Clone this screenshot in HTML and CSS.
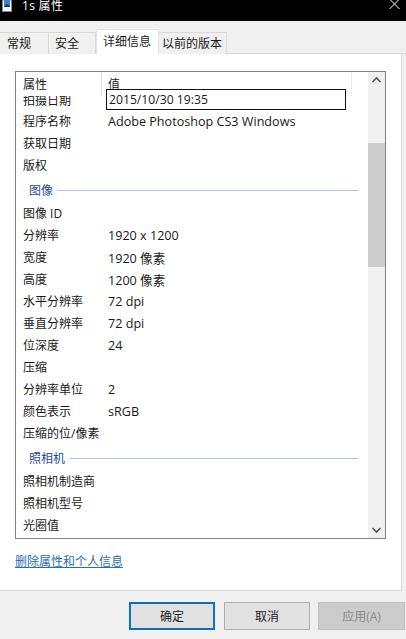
FILE: index.html
```html
<!DOCTYPE html>
<html lang="zh-CN">
<head>
    <meta charset="UTF-8">
    <meta name="viewport" content="width=device-width, initial-scale=1.0">
    <title>1s 属性</title>
    <link rel="stylesheet" href="styles.css">
</head>
<body>
    <div class="window">
        <div class="titlebar">
            <svg class="file-icon" width="11" height="12" viewBox="0 0 11 12">
                <rect x="0.5" y="0" width="9" height="11.5" fill="#f4f8fc" stroke="#7d8ea3"/>
                <rect x="2" y="0" width="6" height="7" fill="#3f86c8"/>
                <path d="M2 7 L4.5 3.5 L6 5.5 L7 4.5 L8 7 Z" fill="#123a66"/>
            </svg>
            <span class="title-text">1s 属性</span>
            <svg class="close-icon" width="11" height="10" viewBox="0 0 11 10">
                <path d="M0.5 -1 L10.5 9 M10.5 -1 L0.5 9" stroke="#fff" stroke-width="1"/>
            </svg>
        </div>

        <div class="tabs">
            <div class="tab">常规</div>
            <div class="tab">安全</div>
            <div class="tab active">详细信息</div>
            <div class="tab">以前的版本</div>
        </div>

        <div class="panel">
            <div class="listbox">
                <div class="list-main">
                    <div class="list-head">
                        <div class="head-name">属性</div>
                        <div class="head-value">值</div>
                    </div>
                    <div class="row clipped"><span class="name">拍摄日期</span></div>
                    <div class="row"><span class="name">程序名称</span><span class="value">Adobe Photoshop CS3 Windows</span></div>
                    <div class="row"><span class="name">获取日期</span></div>
                    <div class="row"><span class="name">版权</span></div>
                    <div class="group"><span>图像</span><i></i></div>
                    <div class="row"><span class="name">图像 ID</span></div>
                    <div class="row"><span class="name">分辨率</span><span class="value">1920 x 1200</span></div>
                    <div class="row"><span class="name">宽度</span><span class="value">1920 像素</span></div>
                    <div class="row"><span class="name">高度</span><span class="value">1200 像素</span></div>
                    <div class="row"><span class="name">水平分辨率</span><span class="value">72 dpi</span></div>
                    <div class="row"><span class="name">垂直分辨率</span><span class="value">72 dpi</span></div>
                    <div class="row"><span class="name">位深度</span><span class="value">24</span></div>
                    <div class="row"><span class="name">压缩</span></div>
                    <div class="row"><span class="name">分辨率单位</span><span class="value">2</span></div>
                    <div class="row"><span class="name">颜色表示</span><span class="value">sRGB</span></div>
                    <div class="row"><span class="name">压缩的位/像素</span></div>
                    <div class="group"><span>照相机</span><i></i></div>
                    <div class="row"><span class="name">照相机制造商</span></div>
                    <div class="row"><span class="name">照相机型号</span></div>
                    <div class="row"><span class="name">光圈值</span></div>
                </div>
                <div class="scrollbar">
                    <svg width="17" height="17" viewBox="0 0 17 17"><path d="M4.5 10 L8.5 6 L12.5 10" fill="none" stroke="#555" stroke-width="1.6"/></svg>
                    <div class="track-top"></div>
                    <div class="thumb"></div>
                    <div class="track-bottom"></div>
                    <svg width="17" height="17" viewBox="0 0 17 17"><path d="M4.5 7 L8.5 11 L12.5 7" fill="none" stroke="#555" stroke-width="1.6"/></svg>
                </div>
                <div class="editor">2015/10/30 19:35</div>
            </div>
            <a class="remove-link" href="#">删除属性和个人信息</a>
        </div>

        <div class="footer">
            <button class="btn primary">确定</button>
            <button class="btn">取消</button>
            <button class="btn disabled">应用(A)</button>
        </div>
    </div>
</body>
</html>
```

FILE: styles.css
```css
* { margin: 0; padding: 0; box-sizing: border-box; }
body {
    font-family: "Open Sans", "Noto Sans CJK SC", sans-serif;
    font-size: 12px;
    color: #1a1a1a;
    background: #f0f0f0;
    overflow: hidden;
}
.window {
    width: 406px;
    height: 639px;
    display: flex;
    flex-direction: column;
}
.titlebar {
    height: 21px;
    background: #000;
    color: #fff;
    display: flex;
    align-items: flex-start;
    padding: 0 6px 0 2px;
    flex: none;
}
.file-icon { flex: none; }
.title-text {
    margin-left: 9px;
    font-size: 12px;
    line-height: 12px;
    letter-spacing: 0.3px;
}
.close-icon { margin-left: auto; }
.tabs {
    height: 33px;
    display: flex;
    align-items: flex-end;
    flex: none;
    border-bottom: 1px solid #d9d9d9;
}
.tab {
    height: 22px;
    line-height: 21px;
    padding: 0 7px;
    background: #f0f0f0;
    border: 1px solid #d9d9d9;
    border-bottom: none;
    border-left: none;
    margin-bottom: -1px;
    white-space: nowrap;
}
.tab:nth-child(1) { width: 49px; }
.tab:nth-child(2) { width: 47px; padding-left: 6px; }
.tab.active {
    width: 63px;
    height: 25px;
    line-height: 23px;
    padding: 0 6px;
    background: #fff;
    border: 1px solid #e3e3e3;
    border-bottom: none;
    position: relative;
    z-index: 1;
}
.tab:nth-child(4) { width: 68px; padding: 0 3px; }
.panel {
    width: 402px;
    height: 537px;
    background: #fff;
    border-right: 1px solid #d9d9d9;
    border-bottom: 1px solid #d9d9d9;
    padding: 17px 0 0 15px;
    flex: none;
}
.listbox {
    width: 371px;
    height: 468px;
    border: 1px solid #828282;
    display: flex;
    position: relative;
}
.list-main {
    flex: 1;
    overflow: hidden;
}
.list-head {
    height: 24px;
    display: flex;
    line-height: 25px;
    border-right: 1px solid #ececec;
    margin-right: 16px;
}
.head-name {
    width: 86px;
    padding-left: 7px;
    border-right: 1px solid #dfdfdf;
}
.head-value { padding-left: 6px; }
.row {
    height: 22px;
    display: flex;
    align-items: center;
}
/* first row has scrolled halfway under the header */
.row.clipped {
    height: 14px;
    align-items: flex-end;
    overflow: hidden;
    padding-bottom: 3px;
    line-height: 12px;
}
.name {
    width: 92px;
    padding-left: 7px;
    flex: none;
}
.value { font-size: 12.6px; }
.group {
    height: 26px;
    display: flex;
    align-items: center;
    padding: 3px 10px 1px 13px;
    color: #1f4b99;
}
.group i {
    flex: 1;
    height: 1px;
    margin-left: 4px;
    background: #b4c6d8;
}
.scrollbar {
    width: 17px;
    flex: none;
    background: #f0f0f0;
    display: flex;
    flex-direction: column;
}
.scrollbar svg { flex: none; }
.track-top { height: 54px; }
.thumb {
    height: 124px;
    background: #cdcdcd;
}
.track-bottom { flex: 1; }
.editor {
    position: absolute;
    left: 90px;
    top: 17px;
    width: 240px;
    height: 21px;
    background: #fff;
    border: 1px solid #111;
    font-size: 12.2px;
    line-height: 19px;
    padding-left: 2px;
}
.remove-link {
    display: inline-block;
    margin-top: 13px;
    color: #2a6db5;
    text-decoration: underline;
}
.footer {
    flex: 1;
    display: flex;
    gap: 9px;
    padding: 11px 0 0 129px;
}
.btn {
    width: 86px;
    height: 28px;
    background: #e1e1e1;
    border: 1px solid #adadad;
    font: inherit;
    color: #1a1a1a;
}
.btn.primary {
    border: 2px solid #0f6fb8;
}
.btn.disabled {
    width: 87px;
    margin-left: -1px;
    background: #cccccc;
    border-color: #bfbfbf;
    color: #8a8a8a;
}
```
